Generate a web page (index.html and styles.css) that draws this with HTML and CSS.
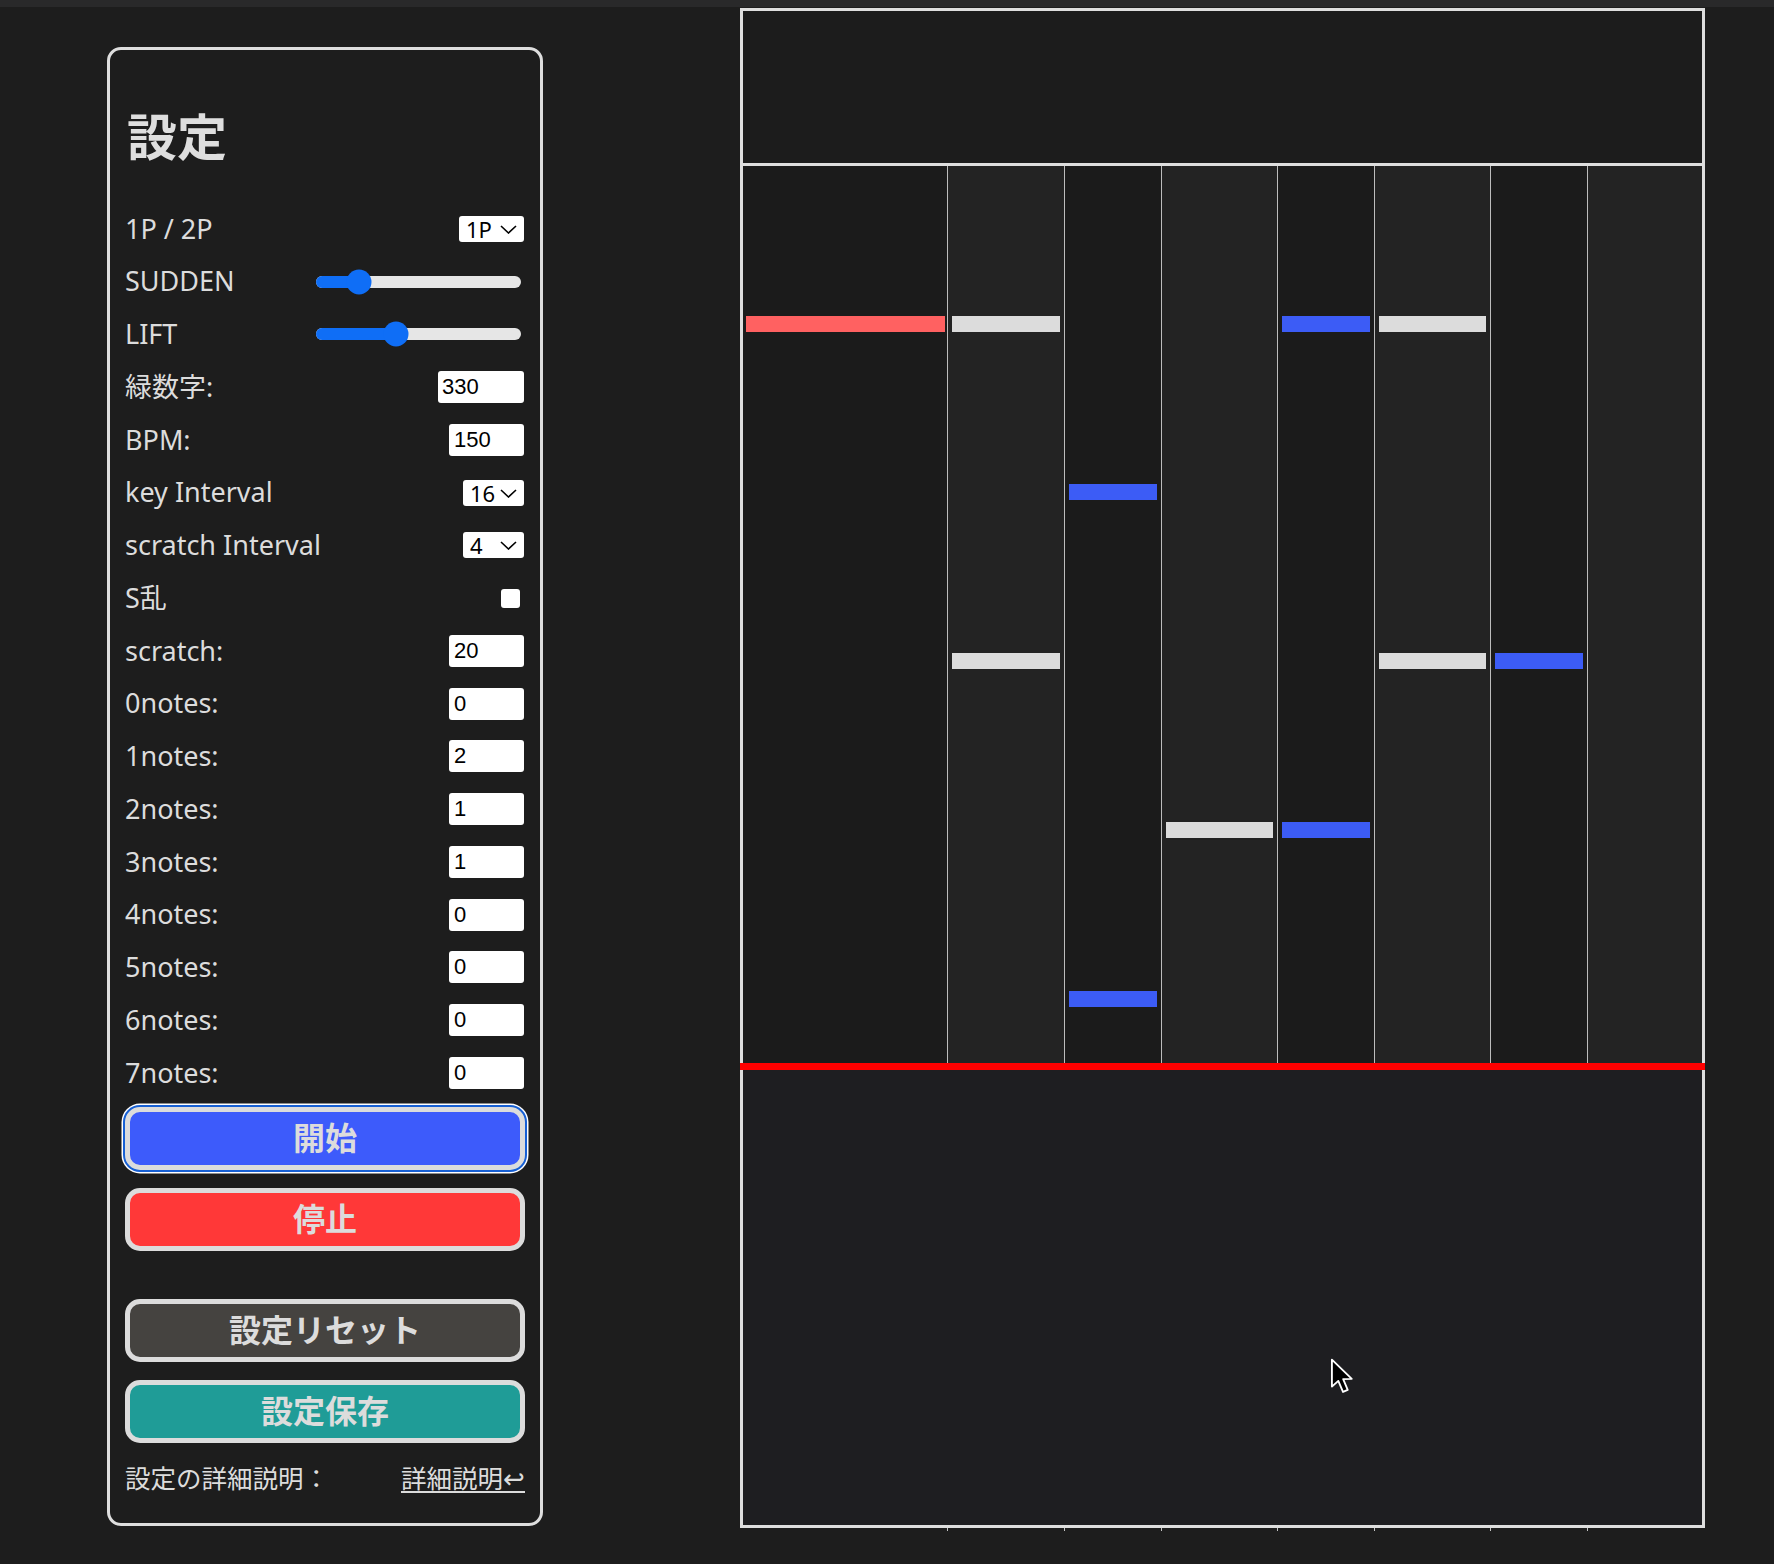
FILE: index.html
```html
<!DOCTYPE html>
<html lang="ja">
<head>
<meta charset="utf-8">
<title>設定</title>
<link rel="stylesheet" href="styles.css">
</head>
<body>
<div class="topbar"></div>
<div class="layout">
  <section class="panel">
    <h1 class="title">設定</h1>

    <div class="row">
      <label class="label">1P / 2P</label>
      <span class="select-wrap w65">
        <select class="select"><option>1P</option><option>2P</option></select>
        <svg class="chev" viewBox="0 0 17 9"><path d="M1 1 L8.5 8 L16 1" fill="none" stroke="#000" stroke-width="1.6"/></svg>
      </span>
    </div>

    <div class="row">
      <label class="label">SUDDEN</label>
      <div class="slider">
        <div class="slider-fill" style="width:43px"></div>
        <div class="slider-thumb" style="left:43px"></div>
      </div>
    </div>

    <div class="row">
      <label class="label">LIFT</label>
      <div class="slider">
        <div class="slider-fill" style="width:80px"></div>
        <div class="slider-thumb" style="left:80px"></div>
      </div>
    </div>

    <div class="row">
      <label class="label">緑数字:</label>
      <input class="num wide" type="text" value="330">
    </div>

    <div class="row">
      <label class="label">BPM:</label>
      <input class="num" type="text" value="150">
    </div>

    <div class="row">
      <label class="label">key Interval</label>
      <span class="select-wrap w61">
        <select class="select"><option>16</option></select>
        <svg class="chev" viewBox="0 0 17 9"><path d="M1 1 L8.5 8 L16 1" fill="none" stroke="#000" stroke-width="1.6"/></svg>
      </span>
    </div>

    <div class="row">
      <label class="label">scratch Interval</label>
      <span class="select-wrap w61">
        <select class="select"><option>4</option></select>
        <svg class="chev" viewBox="0 0 17 9"><path d="M1 1 L8.5 8 L16 1" fill="none" stroke="#000" stroke-width="1.6"/></svg>
      </span>
    </div>

    <div class="row">
      <label class="label">S乱</label>
      <input class="check" type="checkbox">
    </div>

    <div class="row">
      <label class="label">scratch:</label>
      <input class="num" type="text" value="20">
    </div>
    <div class="row">
      <label class="label">0notes:</label>
      <input class="num" type="text" value="0">
    </div>
    <div class="row">
      <label class="label">1notes:</label>
      <input class="num" type="text" value="2">
    </div>
    <div class="row">
      <label class="label">2notes:</label>
      <input class="num" type="text" value="1">
    </div>
    <div class="row">
      <label class="label">3notes:</label>
      <input class="num" type="text" value="1">
    </div>
    <div class="row">
      <label class="label">4notes:</label>
      <input class="num" type="text" value="0">
    </div>
    <div class="row">
      <label class="label">5notes:</label>
      <input class="num" type="text" value="0">
    </div>
    <div class="row">
      <label class="label">6notes:</label>
      <input class="num" type="text" value="0">
    </div>
    <div class="row">
      <label class="label">7notes:</label>
      <input class="num" type="text" value="0">
    </div>

    <button class="btn btn-start">開始</button>
    <button class="btn btn-stop">停止</button>
    <button class="btn btn-reset">設定リセット</button>
    <button class="btn btn-save">設定保存</button>

    <div class="footer">
      <span>設定の詳細説明：</span>
      <a class="link" href="#">詳細説明↩</a>
    </div>
  </section>

  <section class="game">
    <div class="frame">
      <div class="sudden"></div>
      <div class="lanes">
        <div class="lane scratch dark">
          <div class="note red scratch-note" style="top:150px"></div>
        </div>
        <div class="lane k1 light">
          <div class="note white" style="top:150px"></div>
          <div class="note white" style="top:487px"></div>
        </div>
        <div class="lane k2 dark">
          <div class="note blue" style="top:318px"></div>
          <div class="note blue" style="top:825px"></div>
        </div>
        <div class="lane k3 light">
          <div class="note white" style="top:656px"></div>
        </div>
        <div class="lane k4 dark">
          <div class="note blue" style="top:150px"></div>
          <div class="note blue" style="top:656px"></div>
        </div>
        <div class="lane k5 light">
          <div class="note white" style="top:150px"></div>
          <div class="note white" style="top:487px"></div>
        </div>
        <div class="lane k6 dark">
          <div class="note blue" style="top:487px"></div>
        </div>
        <div class="lane k7 light"></div>
      </div>
      <div class="judge-line"></div>
      <div class="lift">
        <svg class="cursor" width="24" height="37" viewBox="0 0 14 22"><path d="M1 1 L1 17 L4.8 13.6 L7.6 20.2 L10.4 19 L7.7 12.6 L12.8 12.4 Z" fill="#000" stroke="#fff" stroke-width="1.1" stroke-linejoin="round"/></svg>
      </div>
    </div>
    <div class="ticks">
      <span class="tick scratch"></span>
      <span class="tick k1"></span>
      <span class="tick k2"></span>
      <span class="tick k3"></span>
      <span class="tick k4"></span>
      <span class="tick k5"></span>
      <span class="tick k6"></span>
      <span class="tick k7"></span>
    </div>
  </section>
</div>
</body>
</html>
```

FILE: styles.css
```css
* { box-sizing: border-box; }

html, body {
  margin: 0;
  padding: 0;
  background: #1d1d1d;
  font-family: "Noto Sans", "Noto Sans CJK JP", sans-serif;
  color: #dcdcdc;
}

.topbar {
  height: 7px;
  background: #29292a;
}

.layout {
  display: flex;
  align-items: flex-start;
  padding-left: 107px;
  gap: 197px;
}

/* ---------- settings panel ---------- */
.panel {
  width: 436px;
  margin-top: 40px;
  border: 3px solid #dedede;
  border-radius: 14px;
  padding: 53px 15px 30px 15px;
}

.title {
  margin: 0 0 37px 2px;
  font-family: "Noto Sans CJK JP", sans-serif;
  font-weight: 700;
  font-size: 50px;
  line-height: 1.248;
  color: #dedede;
}

.row {
  display: flex;
  align-items: center;
  justify-content: space-between;
  height: 52.75px;
}

.label {
  font-size: 27px;
  line-height: 1.2;
  color: #dcdcdc;
}

.select-wrap {
  position: relative;
  display: inline-block;
  height: 26px;
  margin-right: 1px;
}
.select-wrap.w65 { width: 65px; }
.select-wrap.w61 { width: 61px; }

.select {
  -webkit-appearance: none;
  appearance: none;
  display: block;
  width: 100%;
  height: 26px;
  border: 0;
  border-radius: 3px;
  background: #fff;
  color: #000;
  font-family: "Noto Sans", sans-serif;
  font-size: 22px;
  line-height: 26px;
  padding: 0 0 0 7px;
  margin: 0;
}

.chev {
  position: absolute;
  right: 7px;
  top: 9px;
  width: 17px;
  height: 9px;
  pointer-events: none;
}

.slider {
  position: relative;
  width: 205px;
  height: 12px;
  border-radius: 6px;
  background: #e6e6e6;
  margin-right: 4px;
}
.slider-fill {
  height: 100%;
  border-radius: 6px;
  background: #0f6ef6;
}
.slider-thumb {
  position: absolute;
  top: 50%;
  width: 25px;
  height: 25px;
  border-radius: 50%;
  background: #0f6ef6;
  transform: translate(-50%, -50%);
}

.num {
  width: 75px;
  height: 32px;
  border: 0;
  border-radius: 3px;
  background: #fff;
  color: #000;
  font-family: "Liberation Sans", Arial, sans-serif;
  font-size: 22px;
  padding: 0 0 0 5px;
  margin: 0 1px 0 0;
}
.num.wide {
  width: 86px;
  padding-left: 4px;
}

.check {
  -webkit-appearance: none;
  appearance: none;
  width: 19px;
  height: 19px;
  margin: 0 5px 0 0;
  border: 0;
  border-radius: 3px;
  background: #fff;
}

.btn {
  display: block;
  width: 100%;
  height: 63px;
  border: 5px solid #dcdcdc;
  border-radius: 15px;
  font-family: "Noto Sans CJK JP", sans-serif;
  font-weight: 700;
  font-size: 32px;
  line-height: 1;
  color: #dcdcdc;
  padding: 0 0 5px 0;
  cursor: pointer;
}
.btn-start {
  margin-top: 8px;
  background: #3d5bfb;
  box-shadow: 0 0 0 2px #1760d4, 0 0 0 3.5px #ffffff;
}
.btn-stop {
  margin-top: 18px;
  background: #ff3838;
}
.btn-reset {
  margin-top: 48px;
  background: #454340;
}
.btn-save {
  margin-top: 18px;
  background: #1f9c97;
}

.footer {
  margin-top: 19px;
  display: flex;
  justify-content: space-between;
  align-items: baseline;
  font-family: "Noto Sans CJK JP", sans-serif;
  font-size: 25.5px;
  line-height: 1.2;
  color: #dcdcdc;
}
.link {
  color: #dcdcdc;
  text-decoration: underline;
  text-underline-offset: 3px;
  text-decoration-thickness: 2px;
}

/* ---------- game area ---------- */
.game {
  width: 965px;
  margin-top: 1px;
}

.frame {
  border: 3px solid #dedede;
}

.sudden {
  height: 155px;
  background: #1c1c1c;
  border-bottom: 3px solid #dedede;
}

.lanes {
  display: flex;
  height: 897px;
}

.lane {
  position: relative;
  height: 100%;
  border-left: 1px solid #bdbdbd;
}
.lane.dark { background: #1b1b1b; }
.lane.light { background: #232323; }
.lane.scratch { border-left: 0; }

.scratch { width: 204px; flex: none; }
.k1 { width: 117px; flex: none; }
.k2 { width: 97px; flex: none; }
.k3 { width: 116px; flex: none; }
.k4 { width: 97px; flex: none; }
.k5 { width: 116px; flex: none; }
.k6 { width: 97px; flex: none; }
.k7 { width: 115px; flex: none; }

.note {
  position: absolute;
  left: 4px;
  right: 4px;
  height: 16px;
}
.note.scratch-note { left: 3px; right: 2px; }
.note.red { background: #ff6161; }
.note.white { background: #dcdcdc; }
.note.blue { background: #3c5cf6; }

.judge-line {
  height: 7px;
  margin: 0 -3px;
  background: #ff0000;
}

.lift {
  position: relative;
  height: 455px;
  background: #1e1e21;
}

.cursor {
  position: absolute;
  left: 587px;
  top: 288px;
}

.ticks {
  display: flex;
  height: 3px;
  margin: 0 3px;
}
.tick {
  display: block;
  height: 3px;
  border-left: 1px solid #c4c4c4;
}
.tick.scratch { border-left: 0; }
```
